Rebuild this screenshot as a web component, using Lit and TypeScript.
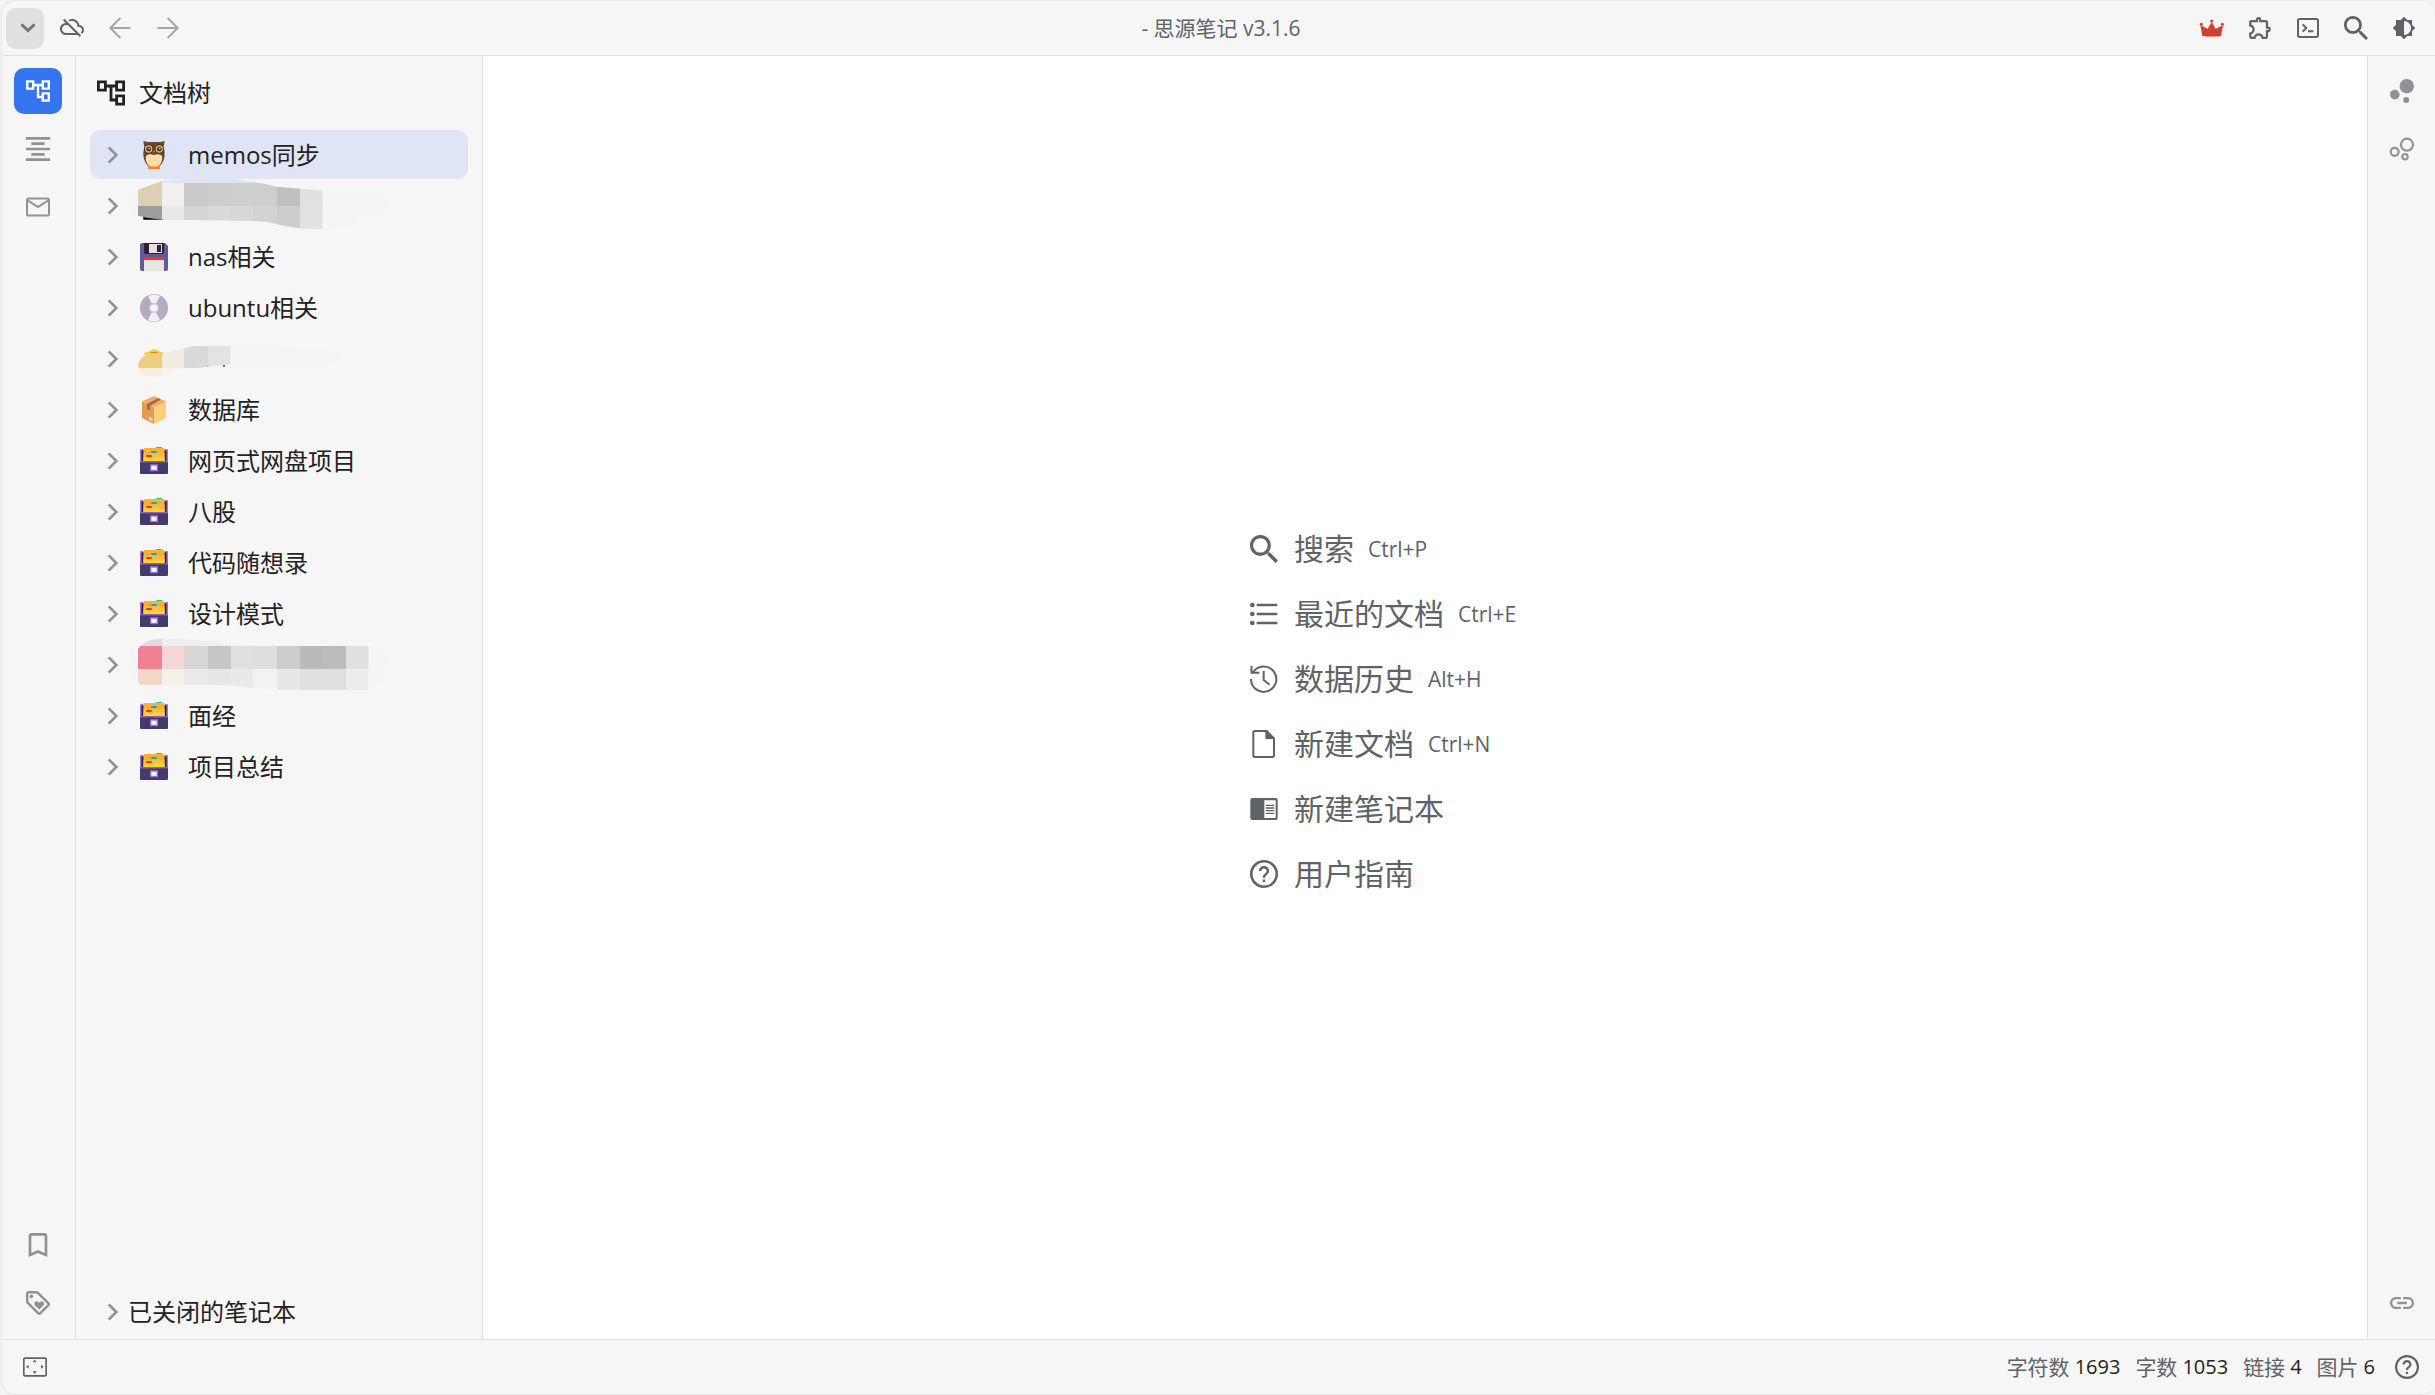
import { LitElement, html, svg, css, TemplateResult } from "lit";
import { customElement, property, state } from "lit/decorators.js";
import { classMap } from "lit/directives/class-map.js";

/* ---------- line icons: [viewBox, shape] ---------- */
const ICONS: Record<string, [string, TemplateResult]> = {
  chevronDown: ["62 62 44 44", svg`<path d="M66 74l18 17 18-17" fill="none" stroke="currentColor" stroke-width="8"/>`],
  chevronRight: ["312 440 54 54", svg`<path d="M326 444l23 23-23 23" fill="none" stroke="currentColor" stroke-width="8"/>`],
  cloudOff: ["0 1 24 24", svg`<path d="M24 15c0-2.64-2.05-4.78-4.65-4.96C18.67 6.59 15.64 4 12 4c-1.33 0-2.57.36-3.65.97l1.49 1.49C10.51 6.17 11.23 6 12 6c3.04 0 5.5 2.46 5.5 5.5v.5H19c1.66 0 3 1.34 3 3 0 .99-.48 1.85-1.21 2.4l1.41 1.41c1.09-.92 1.8-2.27 1.8-3.81zM4.41 3.86L3 5.27l2.77 2.77h-.42C2.34 8.36 0 10.91 0 14c0 3.31 2.69 6 6 6h11.73l2 2 1.41-1.41L4.41 3.86zM6 18c-2.21 0-4-1.79-4-4s1.79-4 4-4h1.73l8 8H6z"/>`],
  back: ["324 47 72 72", svg`<path d="M391 83H332M361 53l-30 30 30 30" fill="none" stroke="currentColor" stroke-width="6"/>`],
  forward: ["467 47 72 72", svg`<path d="M471 83h60M502 53l30 30-30 30" fill="none" stroke="currentColor" stroke-width="6"/>`],
  crown: ["42 47 72 72", svg`<path d="M49 107l-6-32 22 10 12-20 12 20 22-10-6 32q-28 3-56 0z"/><circle cx="46" cy="72" r="4.5"/><circle cx="77" cy="62" r="4.5"/><circle cx="109" cy="72" r="4.5"/>`],
  puzzle: ["1 1.5 21.5 21.5", svg`<path d="M10.5 4.5c.28 0 .5.22.5.5v2h6v6h2c.28 0 .5.22.5.5s-.22.5-.5.5h-2v6h-2.12c-.68-1.75-2.39-3-4.38-3s-3.7 1.25-4.38 3H4v-2.12c1.75-.68 3-2.39 3-4.38 0-1.99-1.24-3.7-2.99-4.38L4 7h6V5c0-.28.22-.5.5-.5m0-2C9.12 2.5 8 3.62 8 5H4c-1.1 0-1.99.9-1.99 2v3.8h.29c1.49 0 2.7 1.21 2.7 2.7s-1.21 2.7-2.7 2.7H2V20c0 1.1.9 2 2 2h3.8v-.3c0-1.49 1.21-2.7 2.7-2.7s2.7 1.21 2.7 2.7v.3H17c1.1 0 2-.9 2-2v-4c1.38 0 2.5-1.12 2.5-2.5S20.38 11 19 11V7c0-1.1-.9-2-2-2h-4c0-1.38-1.12-2.5-2.5-2.5z"/>`],
  terminal: ["333 48 72 72", svg`<g fill="none" stroke="currentColor" stroke-width="6"><rect x="339" y="57" width="60" height="54" rx="5"/><path d="M353 73l11 11-11 11M369 94h16"/></g>`],
  search: ["3 3 17.5 17.5", svg`<path d="M15.5 14h-.79l-.28-.27C15.41 12.59 16 11.11 16 9.5 16 5.91 13.09 3 9.5 3S3 5.91 3 9.5 5.91 16 9.5 16c1.61 0 3.09-.59 4.23-1.57l.27.28v.79l5 4.99L20.49 19l-4.99-5zm-6 0C7.01 14 5 11.99 5 9.5S7.01 5 9.5 5 14 7.01 14 9.5 11.99 14 9.5 14z"/>`],
  contrast: ["0 0 24 24", svg`<path d="M20 8.69V4h-4.69L12 .69 8.69 4H4v4.69L.69 12 4 15.31V20h4.69L12 23.31 15.31 20H20v-4.69L23.31 12zM12 19V5c3.9 0 7 3.1 7 7s-3.1 7-7 7z"/>`],
  tree: ["2 2 20 20", svg`<path d="M22 11V3h-7v3H9V3H2v8h7V8h2v10h4v3h7v-8h-7v3h-2V8h2v3h7zM7 9H4V5h3v4zm10 6h3v4h-3v-4zm0-10h3v4h-3V5z"/>`],
  outline: ["3 3 18 18", svg`<path d="M7 15v2h10v-2H7zm-4 6h18v-2H3v2zm0-8h18v-2H3v2zm4-6v2h10V7H7zM3 3v2h18V3H3z"/>`],
  mail: ["2 2 20 20", svg`<path d="M22 6c0-1.100-.9-2-2-2H4c-1.100 0-2 .9-2 2v12c0 1.100.9 2 2 2h16c1.100 0 2-.9 2-2V6zm-1.700-.3L12 11 3.700 5.700h16.600zm0 12.600H3.700V7.600L12 13l8.300-5.400v10.700z"/>`],
  bookmark: ["3 3 18 18", svg`<path d="M17 3H7c-1.100 0-1.990.9-1.990 2L5 21l7-3 7 3V5c0-1.100-.9-2-2-2zm0 15l-5-2.180L7 18V5h10v13z"/>`],
  tag: ["2 2 20 20", svg`<path d="M21.410 11.580l-9-9C12.040 2.210 11.530 2 11 2H4c-1.100 0-2 .9-2 2v7c0 .53.21 1.040.59 1.410l9 9c.36.37.86.59 1.410.59s1.050-.21 1.410-.59l7-7c.38-.36.59-.86.59-1.410s-.21-1.040-.59-1.420zM13 20.010L4 11V4h7l9 9z"/><circle cx="6.500" cy="6.500" r="1.500"/><path d="M8.900 12.550c0 .57.23 1.070.6 1.450l3.500 3.500 3.500-3.500c.37-.37.6-.89.6-1.450 0-1.130-.92-2.050-2.050-2.050-.57 0-1.080.23-1.450.6l-.6.6-.6-.59c-.37-.38-.89-.61-1.450-.61-1.130 0-2.050.92-2.050 2.050z"/>`],
  graph: ["4 4 16 16", svg`<circle cx="7.200" cy="14.400" r="3.200"/><circle cx="14.800" cy="18" r="2"/><circle cx="15.200" cy="8.800" r="4.800"/>`],
  globalGraph: ["616 411 72 72", svg`<g fill="none" stroke="currentColor" stroke-width="6.500"><circle cx="667" cy="434" r="18"/><circle cx="630" cy="455.500" r="12"/><circle cx="661" cy="470" r="8"/></g>`],
  link: ["2 2 20 20", svg`<path d="M3.900 12c0-1.710 1.390-3.100 3.100-3.100h4V7H7c-2.760 0-5 2.240-5 5s2.240 5 5 5h4v-1.900H7c-1.710 0-3.100-1.390-3.100-3.100zM8 13h8v-2H8v2zm9-6h-4v1.900h4c1.710 0 3.100 1.390 3.100 3.100s-1.390 3.100-3.100 3.100h-4V17h4c2.760 0 5-2.240 5-5s-2.240-5-5-5z"/>`],
  recent: ["59 270 84 84", svg`<circle cx="66" cy="285" r="7"/><circle cx="66" cy="312" r="7"/><circle cx="66" cy="339" r="7"/><path d="M79 281.500h62v7H79zM79 308.500h62v7H79zM79 335.500h62v7H79z"/>`],
  history: ["59 462 84 84", svg`<g fill="none" stroke="currentColor" stroke-width="6"><path d="M62 504a38 38 0 1 0 6-20"/><path d="M63.500 465v20H87"/><path d="M100 480v27l18 14"/></g>`],
  file: ["59 57 84 84", svg`<path d="M109 60H74q-5 0-5 5v68q0 5 5 5h52q5 0 5-5V82z" fill="none" stroke="currentColor" stroke-width="6"/><path d="M105 58v26h28z"/>`],
  notebook: ["59 252 84 84", svg`<path fill-rule="evenodd" d="M66 261h70q6 0 6 6v54q0 6-6 6H66q-6 0-6-6v-54q0-6 6-6zM102 268v53h34v-53z"/><path d="M106 281h26v4h-26zM106 289h26v4h-26zM106 297h26v4h-26zM106 305h26v4h-26z"/>`],
  help: ["2 2 20 20", svg`<circle cx="12" cy="12" r="9.100" fill="none" stroke="currentColor" stroke-width="1.800"/><path d="M11.100 16h1.800v1.800h-1.800zM12 6.200c-2.100 0-3.700 1.600-3.700 3.700h1.800c0-1.100.8-1.900 1.900-1.900s1.900.8 1.900 1.900c0 1.900-2.800 1.800-2.800 4.700h1.800c0-2 2.800-2.300 2.800-4.700 0-2.100-1.600-3.700-3.700-3.700z"/>`],
  dock: ["69 438 72 72", svg`<rect x="71.500" y="447.500" width="67" height="53" rx="3" fill="none" stroke="currentColor" stroke-width="5"/><path d="M98 460l6-8 6 8zM98 487l6 8 6-8zM86 467l-8 6 8 6zM123 467l8 6-8 6z"/>`],
};

/* ---------- coloured notebook icons, 28-unit grid ---------- */
const EMOJI: Record<string, TemplateResult> = {
  owl: svg`<path fill="#6d4534" d="M3.500 0c3 1 5 1 10.500 1s7.500 0 10.500-1c0 3-.5 4-1 6 1.500 4 1.500 8 .5 12-1.500 5-5 9-10 9S5.500 23 4 18C3 14 3 10 4.500 6 4 4 3.500 3 3.500 0z"/><path fill="#ffdea7" d="M6 15c2-2 5-2 8-1 3-1 6-1 8 1 1 5-2 10-5 11h-6c-3-1-6-6-5-11z"/><path fill="#ff822d" d="M8 25.500h12v2.500H8z"/><circle cx="8.700" cy="8" r="4.600" fill="#43291f"/><circle cx="19.300" cy="8" r="4.600" fill="#43291f"/><circle cx="8.700" cy="8" r="3.100" fill="#533566" stroke="#e8cf3d" stroke-width="1.200"/><circle cx="19.300" cy="8" r="3.100" fill="#533566" stroke="#e8cf3d" stroke-width="1.200"/><circle cx="9.200" cy="7.500" r=".7" fill="#fff"/><circle cx="19.800" cy="7.500" r=".7" fill="#fff"/><path fill="#ff822d" d="M12.700 10h2.600L14 12z"/>`,
  floppy: svg`<path fill="#635994" d="M2 0h23l3 3v23q0 2-2 2H2q-2 0-2-2V2q0-2 2-2z"/><path fill="#321b41" d="M4 0h20v9q0 2-2 2H6q-2 0-2-2z"/><path fill="#e1e1e1" d="M9 1h13v9H9z"/><path fill="#321b41" d="M17 2h4v7h-4z"/><path fill="#e6e6e6" d="M4 15h20v13H4z"/><path fill="#ff2d2d" d="M4 14h20v3H4z"/>`,
  disc: svg`<circle cx="14" cy="14" r="14" fill="#b4acbc"/><path fill="#f3eef8" d="M14 14L8 2q6-3 12 0zM14 14l6 12q-6 3-12 0z"/><circle cx="14" cy="14" r="5" fill="#cdc4d6"/><circle cx="14" cy="14" r="3.600" fill="#f6f6f6"/>`,
  box: svg`<path fill="#ffce7c" d="M14 10l12-4.500V22l-12 6z"/><path fill="#e39d4f" d="M2 5.500L14 11v17L2 22z"/><path fill="#f3ad61" d="M14 0l12 5.500L14 11 2 5.500z"/><path fill="#a56953" d="M7 8l11-6 3 1.500L10 10v4.500L7 13z"/><path fill="#e1d8ec" d="M9 20.500l3.500 2v3L9 23.500z"/>`,
  cabinet: svg`<path fill="#433b6b" d="M0 3h28v23q0 1-1 1H1q-1 0-1-1z"/><path fill="#9b78cf" d="M0 3q0-1 1-1h2v13H0zM28 3q0-1-1-1h-2v13h3z"/><path fill="#321b41" d="M1.500 3.500h2V15h-2zM24.500 3.500h2V15h-2z"/><rect x="16" y="0" width="6" height="4" rx="1" fill="#00d26a"/><path fill="#ffb02e" d="M3.500 2q0-1 1-1h19q1 0 1 1v12.500h-21z"/><path fill="#fcbf38" d="M3.500 6.500h21v8h-21z"/><path fill="#fcd03f" d="M3.500 10.500h21v4h-21z"/><rect x="11" y="4" width="6" height="2" rx="1" fill="#00a6ed"/><rect x="6" y="8" width="6" height="2" rx="1" fill="#f8312f"/><path fill="#433b6b" d="M0 15h28v10.500H0z"/><path fill="#8c63c4" d="M0 14h28v1.400H0z"/><rect x="10.700" y="18" width="6.600" height="5.500" fill="#fff" stroke="#9b6fd8" stroke-width="1.400"/>`,
};

interface Cover {
  box: string;
  clip: string;
  halo: string;
  cols: number[];
  rows: number[];
  colors: string[][];
  under?: TemplateResult;
}

const COVERS: Cover[] = [
  {
    box: "174 186 780 147",
    clip: "M174 212L245 186Q330 176 420 176Q500 180 590 203L728 215V331H690Q640 328 560 308Q420 303 245 302L200 296L174 290z",
    halo: "M728 215Q850 218 905 220Q940 250 905 292L830 297Q830 330 728 333zM174 215v78q-34-10-34-42 0-26 34-36z",
    cols: [174, 245, 313, 383, 452, 520, 590, 660, 728],
    rows: [174, 192, 262, 334],
    colors: [
      ["#dccfb4", "#dde4f2", "#dfe4ef", "#dee4f1", "#dfe4ef", "#dee3f0", "#cdcdcd", "#c0c0c0"],
      ["#dccfb4", "#f1f0ee", "#cacaca", "#cdcdcd", "#cdcfce", "#cecece", "#c0c0c0", "#e0e0e0"],
      ["#9e9d9b", "#e8e8e8", "#d5d5d5", "#dadada", "#d8d8d8", "#d3d3d3", "#cdcdcd", "#e2e2e2"],
    ],
    under: svg`<path d="M190 290h50l14 12h-64z" fill="#000"/>`,
  },
  {
    box: "174 642 780 147",
    clip: "M174 735Q176 712 205 703L245 700Q290 690 340 678H452V734L400 738Q360 745 315 745Q280 748 245 768Q220 772 200 768Q178 760 174 735z",
    halo: "M452 672L700 682Q780 685 780 715 770 745 650 750L452 740z",
    cols: [174, 245, 313, 383, 452],
    rows: [670, 745, 775],
    colors: [
      ["#eecd84", "#f3ede1", "#d9d9d9", "#e3e3e3"],
      ["#f7edda", "#f5f2ec", "#f4f4f4", "#f4f4f4"],
    ],
    under: svg`<path d="M190 704q4-10 14-8 18-16 38 0 10-2 12 8z" fill="#ffc83d"/><path d="M213 696h19v3h-19z" fill="#c98a1c"/><path d="M380 736h6v5h-6zM429 734h6v6h-6z" fill="#555"/>`,
  },
  {
    box: "174 27 780 147",
    clip: "M174 54Q190 26 245 22Q340 22 450 41L866 45V177H590L500 168Q430 160 350 161H180L174 156z",
    halo: "M866 41Q925 50 925 85 900 110 918 130 920 160 866 177zM174 64v80q-28-10-28-40 0-30 28-40z",
    cols: [174, 245, 313, 383, 452, 520, 590, 660, 728, 797, 866],
    rows: [20, 45, 115, 178],
    colors: [
      ["#dedce2", "#eeedef", "#efefef", "#f0f0f0", "#f1f1f1", "#f3f3f3", "#f3f3f3", "#f3f3f3", "#f3f3f3", "#f3f3f3"],
      ["#f08294", "#f5d8d5", "#d8d6d7", "#c6c6c6", "#dfdfdf", "#dedede", "#cdcdcd", "#bababa", "#bcbcbc", "#e0e0e0"],
      ["#f3d7c6", "#f5f1ea", "#eaeae8", "#e7e7e7", "#e9e9e9", "#f2f2f2", "#e7e7e7", "#e0e0e0", "#e0e0e0", "#ececec"],
    ],
  },
];

interface Notebook { name?: string; emoji?: string; cover?: number }

const NOTEBOOKS: Notebook[] = [
  { name: "memos同步", emoji: "owl" },
  { cover: 0 },
  { name: "nas相关", emoji: "floppy" },
  { name: "ubuntu相关", emoji: "disc" },
  { cover: 1 },
  { name: "数据库", emoji: "box" },
  { name: "网页式网盘项目", emoji: "cabinet" },
  { name: "八股", emoji: "cabinet" },
  { name: "代码随想录", emoji: "cabinet" },
  { name: "设计模式", emoji: "cabinet" },
  { cover: 2 },
  { name: "面经", emoji: "cabinet" },
  { name: "项目总结", emoji: "cabinet" },
];

const ACTIONS = [
  { icon: "search", label: "搜索", keys: "Ctrl+P" },
  { icon: "recent", label: "最近的文档", keys: "Ctrl+E" },
  { icon: "history", label: "数据历史", keys: "Alt+H" },
  { icon: "file", label: "新建文档", keys: "Ctrl+N" },
  { icon: "notebook", label: "新建笔记本", keys: "" },
  { icon: "help", label: "用户指南", keys: "" },
];

const STATS: [string, number][] = [["字符数", 1693], ["字数", 1053], ["链接", 4], ["图片", 6]];

@customElement("sy-icon")
class SyIcon extends LitElement {
  @property() name = "";

  static styles = css`
    :host { display: inline-flex; flex: none; width: 24px; height: 24px; }
    .glyph { display: block; width: 100%; height: 100%; fill: currentColor; overflow: visible; }
  `;

  render() {
    const emoji = EMOJI[this.name];
    const [box, shape] = emoji ? ["0 0 28 28", emoji] : ICONS[this.name];
    return html`<svg class="glyph" viewBox=${box} aria-hidden="true">${shape}</svg>`;
  }
}

@customElement("sy-cover")
class SyCover extends LitElement {
  @property({ type: Number }) index = 0;

  static styles = css`
    :host { display: block; flex: none; width: 260px; height: 49px; }
    .cover { display: block; width: 100%; height: 100%; overflow: visible; }
  `;

  render() {
    const c = COVERS[this.index];
    return html`<svg class="cover" viewBox=${c.box} aria-hidden="true">
      <clipPath id="edge"><path d=${c.clip} /></clipPath>
      <path d=${c.halo} fill="#f4f5f5" />
      ${c.under ?? ""}
      <g clip-path="url(#edge)" shape-rendering="crispEdges">
        ${c.colors.map((line, r) => line.map((fill, k) => svg`<rect x=${c.cols[k]} y=${c.rows[r]}
          width=${c.cols[k + 1] - c.cols[k]} height=${c.rows[r + 1] - c.rows[r]} fill=${fill} />`))}
      </g>
    </svg>`;
  }
}

@customElement("app-root")
class AppRoot extends LitElement {
  @state() private selected = 0;

  static styles = css`
    :host {
      display: block;
      height: 100vh;
      box-sizing: border-box;
      padding-left: 1px;
      background: #f3f3f3;
      color: #222;
      font-family: "Open Sans", "Noto Sans CJK SC", sans-serif;
      font-size: 24px;
    }
    * { box-sizing: border-box; }
    button { margin: 0; padding: 0; border: 0; background: none; color: inherit; font: inherit; text-align: left; cursor: pointer; }

    .window {
      display: flex;
      flex-direction: column;
      height: 100%;
      border: 1px solid #e6e6e7;
      border-right: 0;
      border-radius: 14px;
      background: #f6f6f6;
      overflow: hidden;
    }
    .toolbar {
      display: grid;
      grid-template-columns: 1fr auto 1fr;
      align-items: center;
      height: 55px;
      flex: none;
      padding: 0 7px 0 4px;
      border-bottom: 1px solid #dedfe0;
      color: #5f6368;
    }
    .tools { display: flex; align-items: center; }
    .tools.end { justify-content: flex-end; }
    .tool { display: flex; align-items: center; justify-content: center; width: 48px; height: 41px; }
    .tool.menu { width: 38px; margin-right: 4px; padding-left: 6px; border-radius: 10px; background: #dfe0e1; color: #747679; }
    .tool.menu sy-icon { width: 16px; height: 16px; }
    .tool.dim { color: #a3a5a8; }
    .tool.vip { color: #d23f31; }
    .title { margin: 0; padding-left: 8px; font-size: 21px; font-weight: 400; line-height: 28px; white-space: nowrap; }

    .body { display: flex; flex: 1; min-height: 0; }
    .dock {
      display: flex;
      flex-direction: column;
      justify-content: space-between;
      flex: none;
      width: 74px;
      padding: 12px 2px 13px 0;
      border-right: 1px solid #dedfe0;
      color: #8f9297;
    }
    .dock.right { width: 68px; padding-right: 0; padding-left: 1px; border-right: 0; border-left: 1px solid #dedfe0; }
    .group { display: flex; flex-direction: column; align-items: center; gap: 12px; }
    .dock-item { display: flex; align-items: center; justify-content: center; width: 48px; height: 46px; border-radius: 10px; }
    .dock-item.active { background: #3575f0; color: #fff; }

    .panel { display: flex; flex-direction: column; flex: none; width: 407px; padding: 0 14px; border-right: 1px solid #dedfe0; }
    .panel-head { display: flex; align-items: center; gap: 14px; height: 74px; padding-left: 7px; }
    .panel-head sy-icon { width: 28px; height: 28px; }
    .panel-title { margin: 0; font-size: 24px; font-weight: 400; line-height: 32px; }
    .list { display: flex; flex-direction: column; gap: 2px; margin: 0; padding: 0; list-style: none; }
    .row { display: flex; align-items: center; width: 100%; height: 49px; padding-left: 14px; border-radius: 10px; }
    .row.on { background: #dfe5f5; }
    .row .arrow { width: 18px; height: 18px; margin-right: 18px; color: #8f9297; }
    .row .mark { width: 28px; height: 28px; margin-right: 20px; }
    .row sy-cover { margin-left: -2px; }
    .label { line-height: 32px; white-space: nowrap; }
    .closed { margin-top: auto; margin-bottom: 3px; }
    .closed .arrow { margin-right: 6px; }

    .main { display: flex; align-items: center; justify-content: center; flex: 1; min-width: 0; padding-top: 28px; background: #fff; color: #5f6368; }
    .actions { display: flex; flex-direction: column; gap: 25px; width: 350px; margin: 0; padding: 0; list-style: none; }
    .action { display: flex; align-items: center; height: 40px; font-size: 30px; line-height: 40px; white-space: nowrap; }
    .action sy-icon { width: 28px; height: 28px; margin-right: 16px; }
    .keys { margin-left: 14px; font: inherit; font-size: 21px; }

    .status {
      display: flex;
      align-items: center;
      justify-content: space-between;
      flex: none;
      height: 55px;
      padding: 0 16px 0 21px;
      border-top: 1px solid #dedfe0;
      color: #5f6368;
      font-size: 21px;
      line-height: 28px;
    }
    .stats { display: flex; align-items: center; gap: 15px; }
    .stat { display: flex; gap: 5px; }
    .count { color: #222; font-size: 20px; }
    .tool-help { display: flex; }
    .stats .tool-help { margin-left: 5px; }
  `;

  private tool(icon: string, label: string, extra = "") {
    return html`<button class="tool ${extra}" aria-label=${label}><sy-icon name=${icon}></sy-icon></button>`;
  }

  private dockItem(icon: string, label: string, active = false) {
    return html`<button class=${classMap({ "dock-item": true, active })} aria-label=${label}>
      <sy-icon name=${icon}></sy-icon>
    </button>`;
  }

  private notebook(n: Notebook, i: number) {
    return html`<li>
      <button class=${classMap({ row: true, on: i === this.selected })}
        aria-label=${n.name ?? "笔记本"} @click=${() => (this.selected = i)}>
        <sy-icon class="arrow" name="chevronRight"></sy-icon>
        ${n.name
          ? html`<sy-icon class="mark" name=${n.emoji!}></sy-icon><span class="label">${n.name}</span>`
          : html`<sy-cover .index=${n.cover!}></sy-cover>`}
      </button>
    </li>`;
  }

  render() {
    return html`<div class="window">
      <header class="toolbar">
        <div class="tools">
          ${this.tool("chevronDown", "主菜单", "menu")}
          ${this.tool("cloudOff", "同步")}
          ${this.tool("back", "后退", "dim")}
          ${this.tool("forward", "前进", "dim")}
        </div>
        <h1 class="title">- 思源笔记 v3.1.6</h1>
        <div class="tools end">
          ${this.tool("crown", "会员", "vip")}
          ${this.tool("puzzle", "插件")}
          ${this.tool("terminal", "命令面板")}
          ${this.tool("search", "搜索")}
          ${this.tool("contrast", "外观模式")}
        </div>
      </header>
      <div class="body">
        <nav class="dock">
          <div class="group">
            ${this.dockItem("tree", "文档树", true)}
            ${this.dockItem("outline", "大纲")}
            ${this.dockItem("mail", "收集箱")}
          </div>
          <div class="group">
            ${this.dockItem("bookmark", "书签")}
            ${this.dockItem("tag", "标签")}
          </div>
        </nav>
        <aside class="panel">
          <div class="panel-head">
            <sy-icon name="tree"></sy-icon>
            <h2 class="panel-title">文档树</h2>
          </div>
          <ul class="list">${NOTEBOOKS.map((n, i) => this.notebook(n, i))}</ul>
          <button class="row closed">
            <sy-icon class="arrow" name="chevronRight"></sy-icon>
            <span class="label">已关闭的笔记本</span>
          </button>
        </aside>
        <main class="main">
          <ul class="actions">
            ${ACTIONS.map((a) => html`<li>
              <button class="action">
                <sy-icon name=${a.icon}></sy-icon>
                <span>${a.label}</span>
                ${a.keys ? html`<kbd class="keys">${a.keys}</kbd>` : ""}
              </button>
            </li>`)}
          </ul>
        </main>
        <nav class="dock right">
          <div class="group">
            ${this.dockItem("graph", "关系图")}
            ${this.dockItem("globalGraph", "全局关系图")}
          </div>
          <div class="group">${this.dockItem("link", "反向链接")}</div>
        </nav>
      </div>
      <footer class="status">
        <button class="tool-help" aria-label="停靠栏"><sy-icon name="dock"></sy-icon></button>
        <div class="stats">
          ${STATS.map(([k, v]) => html`<span class="stat"><span>${k}</span><span class="count">${v}</span></span>`)}
          <button class="tool-help" aria-label="帮助"><sy-icon name="help"></sy-icon></button>
        </div>
      </footer>
    </div>`;
  }
}
